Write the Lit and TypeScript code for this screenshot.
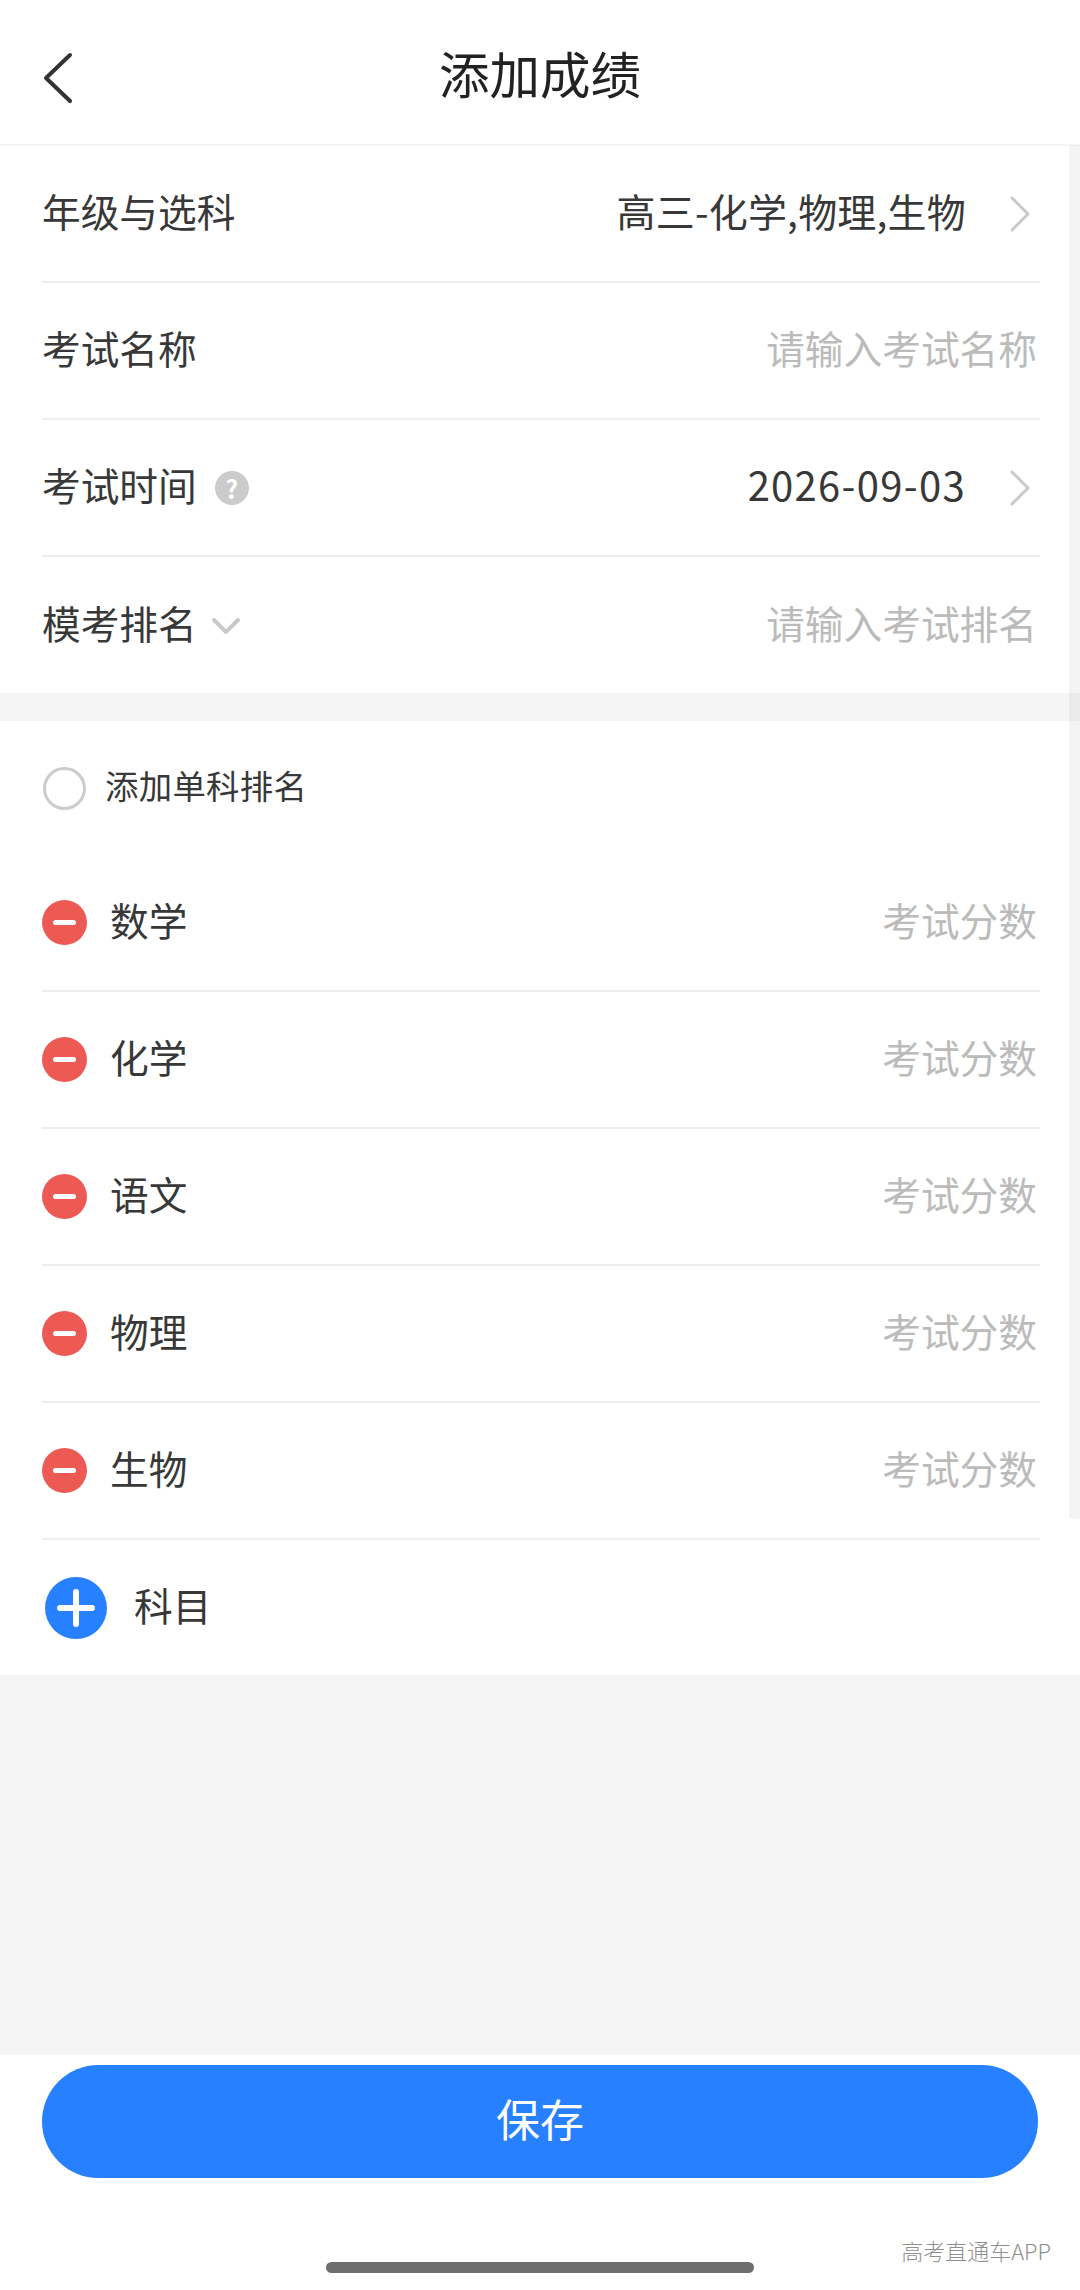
import { LitElement, html, css, svg } from "lit";
import { customElement } from "lit/decorators.js";

const chevronRight = svg`<svg class="chev" viewBox="0 0 22 36" width="22" height="36"><path d="M3 2 L19 18 L3 34" fill="none" stroke="#c9c9c9" stroke-width="3" stroke-linecap="round" stroke-linejoin="round"/></svg>`;

@customElement("app-root")
export class AppRoot extends LitElement {
  static styles = css`
    :host {
      display: block;
      position: relative;
      width: 1080px;
      height: 2290px;
      overflow: hidden;
      font-family: "Noto Sans CJK SC", "Noto Sans", sans-serif;
      color: #383838;
      background: #fff;
    }
    .page { display: flex; flex-direction: column; height: 100%; }
    .t { display: block; padding-bottom: 7px; }
    .header {
      flex: none;
      display: flex;
      align-items: center;
      justify-content: center;
      position: relative;
      border-bottom: 2px solid #f5f5f5;
      font-size: 50.5px;
      color: #222;
      box-sizing: border-box;
      height: 146px;
      padding-top: 6px;
    }
    .back { position: absolute; left: 43px; top: 52px; }
    .section { padding-left: 42px; padding-right: 40px; flex: none; }
    .row {
      height: 137px;
      box-sizing: border-box;
      border-bottom: 2px solid #eeeeee;
      display: flex;
      align-items: center;
      font-size: 38.7px;
      line-height: 50px;
    }
    .row.last { border-bottom: none; height: 136px; }
    .label { display: flex; align-items: center; }
    .value { margin-left: auto; display: flex; align-items: center; font-size: 39px; }
    .wide { letter-spacing: 0.2px; }
    .ph { margin-left: auto; color: #bbb; margin-right: 3px; }
    .chev { margin-left: 43px; margin-right: 9px; }
    .date { letter-spacing: 1.3px; font-size: 40px; }
    .help {
      width: 34px; height: 34px; border-radius: 50%;
      background: #cbcbcb; color: #fff;
      font-size: 25px; line-height: 34px; font-weight: 700;
      text-align: center; margin-left: 18px;
    }
    .down { margin-left: 14px; margin-top: 3px; }
    .gap { height: 28px; background: #f5f5f5; flex: none; }
    .radio-row {
      height: 134px;
      display: flex;
      align-items: center;
      padding-left: 43px;
      font-size: 33.4px;
      letter-spacing: 0.3px;
      flex: none;
    }
    .radio {
      width: 43px; height: 43px; box-sizing: border-box;
      border: 3px solid #cccccc; border-radius: 50%;
      margin-right: 19px;
    }
    .minus {
      width: 45px; height: 45px; border-radius: 50%;
      background: #ec5a53;
      display: flex; align-items: center; justify-content: center;
      margin-right: 23px;
      flex: none;
    }
    .minus i { display: block; width: 23px; height: 5px; border-radius: 3px; background: #fff; }
    .add-row {
      height: 135px;
      display: flex;
      align-items: center;
      padding-left: 45px;
      font-size: 38.7px;
      flex: none;
    }
    .plus { margin-right: 27px; flex: none; }
    .spacer { flex: 1; background: #f5f5f5; }
    .footer {
      height: 235px;
      flex: none;
      box-sizing: border-box;
      padding: 10px 42px 0;
    }
    .save {
      height: 113px;
      border-radius: 57px;
      background: #2680ff;
      color: #fff;
      font-size: 44px;
      display: flex;
      align-items: center;
      justify-content: center;
    }
    .strip {
      position: absolute;
      left: 1069px; right: 0; top: 145px; height: 1374px;
      background: rgba(0, 0, 0, 0.045);
    }
    .mark {
      position: absolute;
      right: 29px; top: 2235px;
      font-size: 22px; line-height: 30px;
      color: #8f8f8f;
      font-weight: 300;
    }
    .home {
      position: absolute;
      left: 326px; width: 428px; top: 2262px; height: 11px;
      border-radius: 6px;
      background: #6e6e6e;
    }
  `;

  render() {
    const subjects = ["数学", "化学", "语文", "物理", "生物"];
    return html`
      <div class="page">
        <div class="header">
          <svg class="back" width="30" height="52" viewBox="0 0 30 52">
            <path d="M27 3 L3 26 L27 49" fill="none" stroke="#333" stroke-width="4" stroke-linecap="round" stroke-linejoin="round"/>
          </svg>
          <span class="t">添加成绩</span>
        </div>
        <div class="section">
          <div class="row">
            <span class="label t">年级与选科</span>
            <span class="value"><span class="t wide">高三-化学,物理,生物</span>${chevronRight}</span>
          </div>
          <div class="row">
            <span class="label t">考试名称</span>
            <span class="ph t">请输入考试名称</span>
          </div>
          <div class="row">
            <span class="label"><span class="t">考试时间</span><span class="help">?</span></span>
            <span class="value"><span class="date t">2026-09-03</span>${chevronRight}</span>
          </div>
          <div class="row last">
            <span class="label"><span class="t">模考排名</span>
              <svg class="down" width="30" height="20" viewBox="0 0 30 20">
                <path d="M3 3 L15 15 L27 3" fill="none" stroke="#c9c9c9" stroke-width="4" stroke-linecap="round" stroke-linejoin="round"/>
              </svg>
            </span>
            <span class="ph t">请输入考试排名</span>
          </div>
        </div>
        <div class="gap"></div>
        <div class="radio-row"><span class="radio"></span><span class="t">添加单科排名</span></div>
        <div class="section">
          ${subjects.map(
            (s) => html`<div class="row">
              <span class="minus"><i></i></span>
              <span class="label t">${s}</span>
              <span class="ph t">考试分数</span>
            </div>`
          )}
        </div>
        <div class="add-row">
          <svg class="plus" width="62" height="62" viewBox="0 0 62 62">
            <circle cx="31" cy="31" r="31" fill="#2680ff"/>
            <path d="M15 31 H47 M31 15 V47" stroke="#fff" stroke-width="6" stroke-linecap="round"/>
          </svg>
          <span class="t">科目</span>
        </div>
        <div class="spacer"></div>
        <div class="footer"><div class="save"><span class="t">保存</span></div></div>
      </div>
      <div class="strip"></div>
      <div class="mark">高考直通车APP</div>
      <div class="home"></div>
    `;
  }
}
